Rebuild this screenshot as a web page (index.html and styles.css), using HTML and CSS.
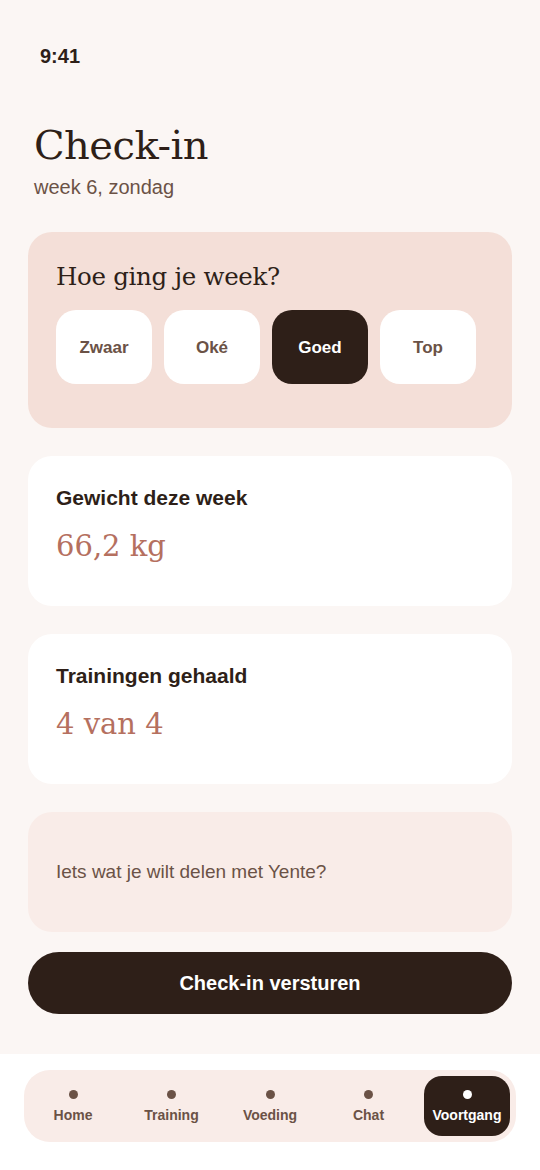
FILE: index.html
```html
<!DOCTYPE html>
<html>
<head>
    <link rel="stylesheet" href="styles.css">
</head>
<body>
  <div id="screen">
    <div class="status">9:41</div>

    <div class="header">
      <h1>Check-in</h1>
      <p class="subtitle">week 6, zondag</p>
    </div>

    <div class="card moodCard">
      <h2>Hoe ging je week?</h2>
      <div class="moodRow">
        <div class="mood">Zwaar</div>
        <div class="mood">Oké</div>
        <div class="mood active">Goed</div>
        <div class="mood">Top</div>
      </div>
    </div>

    <div class="card statCard">
      <div class="statLabel">Gewicht deze week</div>
      <div class="statValue">66,2 kg</div>
    </div>

    <div class="card statCard">
      <div class="statLabel">Trainingen gehaald</div>
      <div class="statValue">4 van 4</div>
    </div>

    <div class="note">Iets wat je wilt delen met Yente?</div>

    <div class="submit">Check-in versturen</div>
  </div>

  <div id="tabBar">
    <div class="tabs">
      <div class="tab"><span class="dot"></span>Home</div>
      <div class="tab"><span class="dot"></span>Training</div>
      <div class="tab"><span class="dot"></span>Voeding</div>
      <div class="tab"><span class="dot"></span>Chat</div>
      <div class="tab active"><span class="dot"></span>Voortgang</div>
    </div>
  </div>
</body>
</html>
```

FILE: styles.css
```css
body {
  margin: 0;
  background: #fbf6f4;
  font-family: "Liberation Sans", Arial, sans-serif;
  color: #2e1f18;
  -webkit-font-smoothing: antialiased;
}
#screen {
  padding: 44px 28px 40px;
}
.status {
  padding-left: 12px;
  font-size: 20px;
  line-height: 24px;
  font-weight: bold;
}
.header {
  padding: 53px 6px 0;
}
h1 {
  margin: 0;
  font-family: "DejaVu Serif", Georgia, serif;
  font-weight: normal;
  font-size: 40px;
  line-height: 48px;
  letter-spacing: -0.5px;
}
.subtitle {
  margin: 6px 0 0;
  font-size: 20px;
  line-height: 24px;
  color: #6b5246;
}
.card {
  border-radius: 24px;
  background: #fff;
}
.moodCard {
  margin-top: 33px;
  padding: 29px 28px 44px;
  background: #f4dfd8;
}
h2 {
  margin: 0;
  font-family: "DejaVu Serif", Georgia, serif;
  font-weight: normal;
  font-size: 24.5px;
  line-height: 32px;
  letter-spacing: -0.3px;
}
.moodRow {
  display: flex;
  gap: 12px;
  margin-top: 17px;
}
.mood {
  width: 96px;
  height: 74px;
  padding-top: 2px;
  box-sizing: border-box;
  border-radius: 20px;
  background: #fff;
  display: flex;
  align-items: center;
  justify-content: center;
  font-size: 17px;
  font-weight: bold;
  color: #6b5246;
}
.mood.active {
  background: #2e1f18;
  color: #fff;
}
.statCard {
  margin-top: 28px;
  padding: 30px 28px 40px;
}
.statLabel {
  font-size: 21px;
  line-height: 24px;
  font-weight: bold;
}
.statValue {
  margin-top: 16px;
  font-family: "DejaVu Serif", Georgia, serif;
  font-size: 29px;
  line-height: 40px;
  color: #b5705f;
}
.note {
  margin-top: 28px;
  height: 120px;
  box-sizing: border-box;
  padding: 0 28px;
  display: flex;
  align-items: center;
  border-radius: 24px;
  background: #f9ece8;
  font-size: 19px;
  color: #6b5246;
}
.submit {
  margin-top: 20px;
  height: 62px;
  border-radius: 31px;
  background: #2e1f18;
  color: #fff;
  display: flex;
  align-items: center;
  justify-content: center;
  font-size: 20px;
  font-weight: bold;
}
#tabBar {
  background: #fff;
  padding: 16px 24px 28px;
}
.tabs {
  display: flex;
  justify-content: space-between;
  padding: 6px;
  border-radius: 26px;
  background: #f9ece8;
}
.tab {
  width: 86px;
  height: 60px;
  box-sizing: border-box;
  padding-top: 14px;
  border-radius: 18px;
  display: flex;
  flex-direction: column;
  align-items: center;
  gap: 8px;
  font-size: 14px;
  line-height: 16px;
  font-weight: bold;
  color: #6b5246;
}
.dot {
  width: 9px;
  height: 9px;
  border-radius: 50%;
  background: #6b5246;
}
.tab.active {
  background: #2e1f18;
  color: #fff;
}
.tab.active .dot {
  background: #fff;
}
```
